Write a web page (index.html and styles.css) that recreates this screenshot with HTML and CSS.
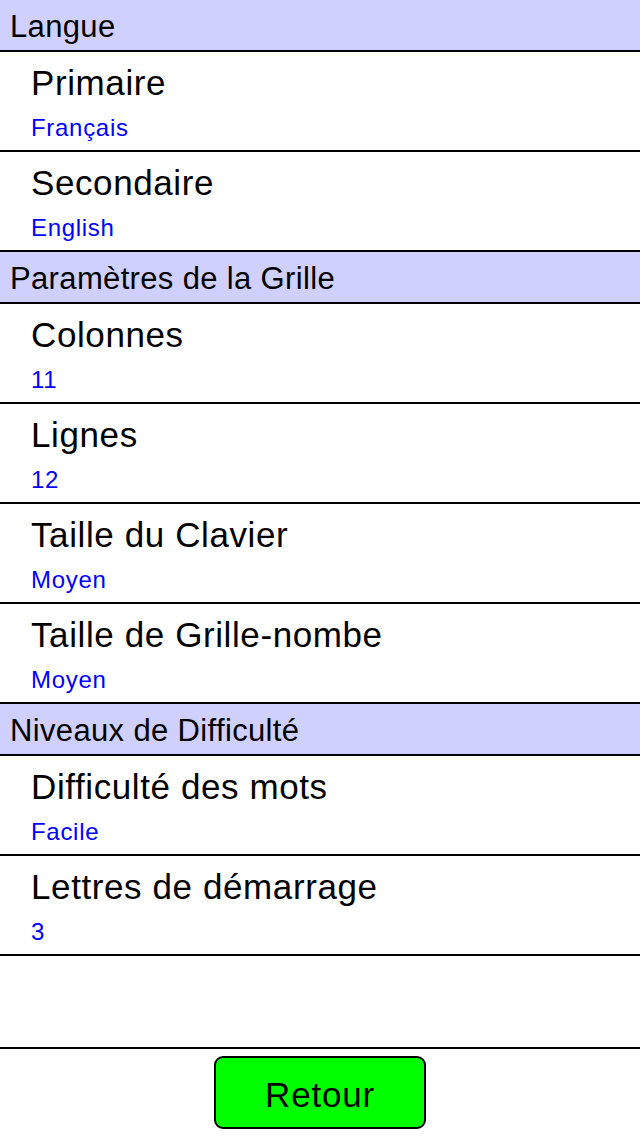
FILE: index.html
```html
<!DOCTYPE html>
<html lang="fr">
<head>
<meta charset="utf-8">
<title>Paramètres</title>
<link rel="stylesheet" href="styles.css">
</head>
<body>
<div class="page">
  <div class="list">
    <div class="section-header">Langue</div>
    <div class="row"><div class="title">Primaire</div><div class="value">Français</div></div>
    <div class="row"><div class="title">Secondaire</div><div class="value">English</div></div>
    <div class="section-header">Paramètres de la Grille</div>
    <div class="row"><div class="title">Colonnes</div><div class="value">11</div></div>
    <div class="row"><div class="title">Lignes</div><div class="value">12</div></div>
    <div class="row"><div class="title">Taille du Clavier</div><div class="value">Moyen</div></div>
    <div class="row"><div class="title">Taille de Grille-nombe</div><div class="value">Moyen</div></div>
    <div class="section-header">Niveaux de Difficulté</div>
    <div class="row"><div class="title">Difficulté des mots</div><div class="value">Facile</div></div>
    <div class="row"><div class="title">Lettres de démarrage</div><div class="value">3</div></div>
  </div>
  <div class="spacer"></div>
  <div class="footer">
    <button class="back-button">Retour</button>
  </div>
</div>
</body>
</html>
```
FILE: styles.css
```css
html, body {
  margin: 0;
  padding: 0;
  background: #ffffff;
}
body {
  font-family: "Liberation Sans", Arial, sans-serif;
  color: #000000;
}
.page {
  display: flex;
  flex-direction: column;
  height: 1136px;
  width: 640px;
}
.list {
  display: flex;
  flex-direction: column;
}
.section-header {
  height: 50px;
  line-height: 54px;
  padding-left: 10px;
  font-size: 31px;
  letter-spacing: 0.35px;
  background: #d0d0ff;
  border-bottom: 2px solid #000000;
  white-space: nowrap;
  overflow: hidden;
}
.row {
  height: 98px;
  box-sizing: content-box;
  border-bottom: 2px solid #000000;
  padding-left: 31px;
  display: flex;
  flex-direction: column;
}
.title {
  margin-top: 13px;
  font-size: 35px;
  line-height: 35px;
  letter-spacing: 0.6px;
  white-space: nowrap;
}
.value {
  margin-top: 16px;
  font-size: 24px;
  line-height: 24px;
  letter-spacing: 0.7px;
  color: #0000ff;
  white-space: nowrap;
}
.spacer {
  flex: 1;
}
.footer {
  border-top: 2px solid #000000;
  height: 87px;
  display: flex;
  justify-content: center;
  align-items: center;
}
.back-button {
  width: 212px;
  height: 73px;
  margin-left: 0;
  padding: 4px 0 0 0;
  background: #00ff00;
  border: 2px solid #000000;
  border-radius: 9px;
  font-family: "Liberation Sans", Arial, sans-serif;
  font-size: 35px;
  letter-spacing: 0.8px;
  color: #000000;
  cursor: pointer;
}
```
